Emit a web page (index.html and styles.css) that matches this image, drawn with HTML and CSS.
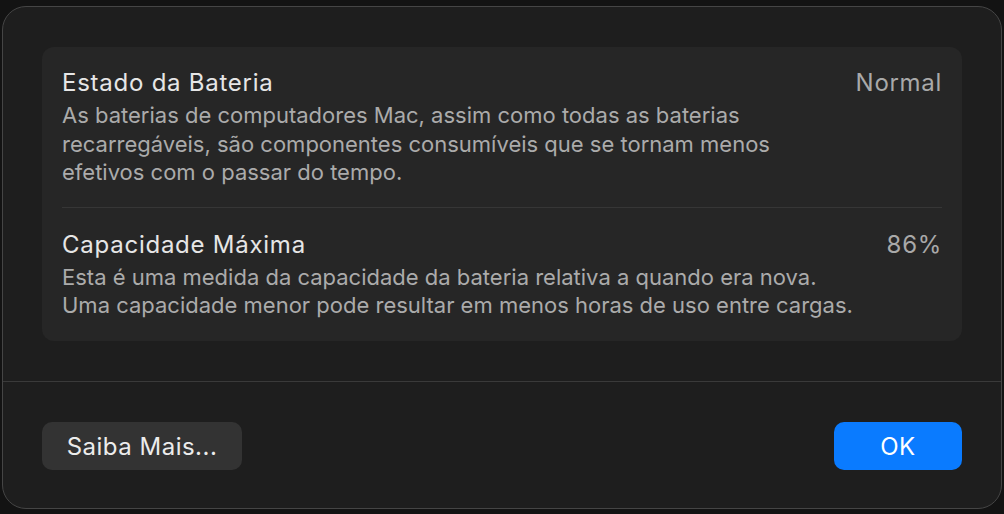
FILE: index.html
```html
<!DOCTYPE html>
<html lang="pt">
<head>
<meta charset="utf-8">
<link rel="stylesheet" href="styles.css">
</head>
<body>
<div class="window">
  <div class="content">
    <div class="card">
      <div class="row">
        <div class="row-head">
          <span class="title">Estado da Bateria</span>
          <span class="value">Normal</span>
        </div>
        <p class="desc">As baterias de computadores Mac, assim como todas as baterias<br>recarregáveis, são componentes consumíveis que se tornam menos<br>efetivos com o passar do tempo.</p>
      </div>
      <div class="divider"></div>
      <div class="row">
        <div class="row-head">
          <span class="title">Capacidade Máxima</span>
          <span class="value">86%</span>
        </div>
        <p class="desc">Esta é uma medida da capacidade da bateria relativa a quando era nova.<br>Uma capacidade menor pode resultar em menos horas de uso entre cargas.</p>
      </div>
    </div>
  </div>
  <div class="footer">
    <button class="btn btn-secondary">Saiba Mais...</button>
    <button class="btn btn-primary">OK</button>
  </div>
</div>
</body>
</html>
```
FILE: styles.css
```css
html, body {
  margin: 0;
  padding: 0;
  background: #131313;
  width: 1004px;
  height: 514px;
  overflow: hidden;
  font-family: Inter, "Noto Sans", "Liberation Sans", sans-serif;
}
body {
  padding: 6px 2px 5px 2px;
  box-sizing: border-box;
}
.window {
  height: 503px;
  background: #1e1e1e;
  border: 1px solid #454545;
  border-radius: 24px;
  box-sizing: border-box;
  display: flex;
  flex-direction: column;
  overflow: hidden;
}
.content {
  padding: 40px 39px 0 39px;
  height: 375px;
  box-sizing: border-box;
  border-bottom: 1px solid #3a3a3a;
}
.card {
  background: #262626;
  border-radius: 12px;
  padding: 0 20px;
  height: 294px;
  box-sizing: border-box;
}
.row {
  padding-top: 21px;
}
.row + .divider + .row {
  padding-top: 22px;
}
.row-head {
  display: flex;
  justify-content: space-between;
  align-items: baseline;
  line-height: 30px;
}
.title {
  font-size: 24px;
  letter-spacing: 0.75px;
  color: #e6e6e6;
}
.value {
  font-size: 24px;
  letter-spacing: 0.7px;
  color: #a9a9a9;
}
.desc {
  margin: 3px 0 0 0;
  font-size: 22px;
  line-height: 28.5px;
  color: #ababab;
  letter-spacing: 0;
}
.divider {
  height: 1px;
  background: #363636;
  margin-top: 20px;
}
.footer {
  flex: 1;
  display: flex;
  justify-content: space-between;
  align-items: center;
  padding: 0 39px 0 39px;
}
.btn {
  height: 48px;
  border: none;
  border-radius: 10px;
  font-family: inherit;
  font-size: 24px;
  letter-spacing: 0.5px;
  color: #ececec;
  margin-top: 2px;
  padding: 0;
}
.btn-secondary {
  width: 200px;
  background: #333333;
}
.btn-primary {
  width: 128px;
  background: #0a7bff;
  color: #ffffff;
}
```
